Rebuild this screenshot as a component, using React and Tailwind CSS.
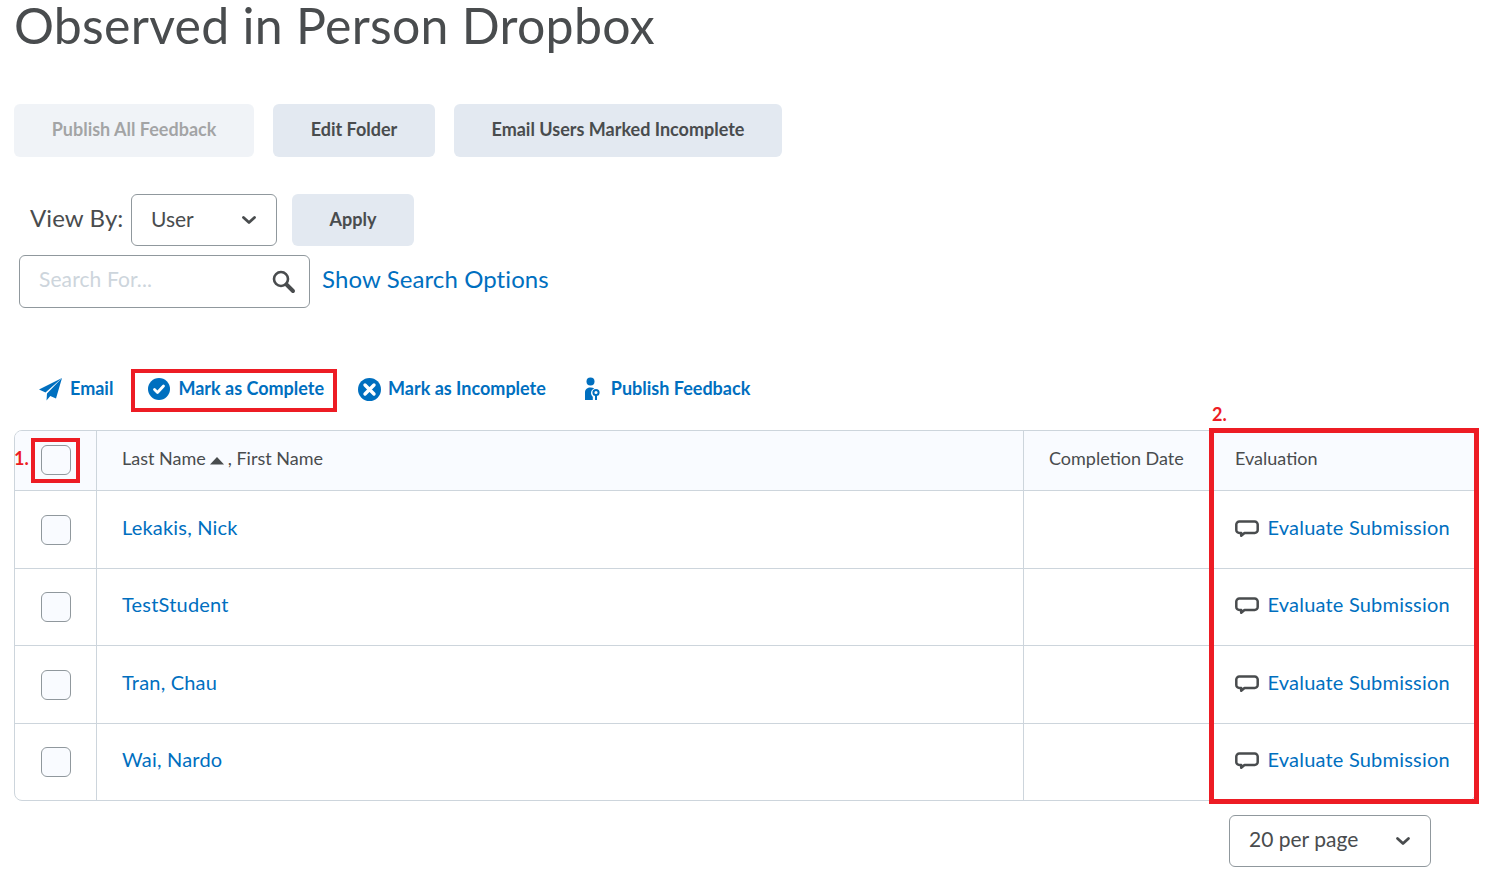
import React from "react";

const Chevron = () => (
  <svg width="16" height="10" viewBox="0 0 16 10" fill="none" className="shrink-0">
    <path d="M2.500 2.500L8 7.500l5.500-5" stroke="#494c4e" strokeWidth="2.800" strokeLinecap="round" strokeLinejoin="round" />
  </svg>
);

const Bubble = () => (
  <svg width="24" height="18" viewBox="0 0 24 18" fill="none" className="shrink-0 mt-[4px]">
    <path d="M4.500 1.500h15A3 3 0 0 1 22.700 4.500v5.500A3 3 0 0 1 19.500 13H9.500L6.200 15.800V13H4.500A3 3 0 0 1 1.300 10V4.500A3 3 0 0 1 4.500 1.500z" stroke="#494c4e" strokeWidth="2.500" strokeLinejoin="round" />
  </svg>
);

const Check = () => <span className="w-[30px] h-[30px] rounded-md border border-[#90989d] bg-[#f9fbff] block" />;

const Btn = ({ className, children }) => (
  <button className={"rounded-md bg-[#e3e9f1] text-[#494c4e] font-bold text-[18px] pb-[2px] " + className}>{children}</button>
);

const Row = ({ name, h }) => (
  <div className={"flex border-t border-[#cdd5dc] " + h}>
    <div className="w-[82px] shrink-0 border-r border-[#cdd5dc] flex items-center justify-center pl-[1px]"><Check /></div>
    <div className="flex-1 border-r border-[#cdd5dc] flex items-center pl-[25px] text-[20px] tracking-[0.2px] text-[#006fbf] pb-[6px]">{name}</div>
    <div className="w-[185px] shrink-0" />
    <div className="w-[266px] shrink-0 flex items-center pl-[26px] gap-[8.500px] pb-[6px]">
      <Bubble />
      <span className="text-[20px] tracking-[0.2px] text-[#006fbf] whitespace-nowrap">Evaluate Submission</span>
    </div>
  </div>
);

export default function App() {
  return (
    <div className="relative w-[1486px] h-[876px] overflow-hidden bg-white text-[#494c4e] font-['Lato','Liberation_Sans',sans-serif] pl-[14px]">
      <h1 className="h-[104px] text-[50px] leading-[50px] tracking-[0.27px] font-normal whitespace-nowrap">Observed in Person Dropbox</h1>

      <div className="flex gap-[19px] h-[53px]">
        <Btn className="w-[240px] opacity-50">Publish All Feedback</Btn>
        <Btn className="w-[162px]">Edit Folder</Btn>
        <Btn className="w-[328px]">Email Users Marked Incomplete</Btn>
      </div>

      <div className="flex items-center mt-[37px] h-[52px] pl-[16px]">
        <span className="text-[24px] tracking-[0.1px] w-[101px] pb-[4px]">View By:</span>
        <div className="w-[146px] h-[52px] rounded-md border border-[#90989d] flex items-center justify-between pl-[19px] pr-[19px] text-[21px]">
          <span className="pb-[3px]">User</span><Chevron />
        </div>
        <Btn className="ml-[15px] w-[122px] h-[52px]">Apply</Btn>
      </div>

      <div className="flex items-center mt-[9px] h-[53px] pl-[5px]">
        <div className="w-[291px] h-[53px] rounded-md border border-[#90989d] flex items-center justify-between pl-[19px] pr-[13px] text-[21px] tracking-[0.1px] text-[#cdd5dc]">
          <span className="pb-[5px]">Search For...</span>
          <svg width="25" height="25" viewBox="0 0 25 25" fill="none">
            <circle cx="10" cy="10" r="7" stroke="#494c4e" strokeWidth="2.600" />
            <path d="M15.500 15.500l6.500 6.500" stroke="#494c4e" strokeWidth="4" strokeLinecap="round" />
          </svg>
        </div>
        <span className="ml-[12px] text-[24px] tracking-[0.1px] text-[#006fbf] whitespace-nowrap pb-[6px]">Show Search Options</span>
      </div>

      <div className="flex items-center h-[40px] mt-[61px] pl-[25px] text-[18px] font-bold text-[#006fbf] whitespace-nowrap">
        <svg width="23" height="23" viewBox="0 0 23 23" fill="#006fbf" className="shrink-0">
          <path d="M23 0L0 11.500l6.500 3L23 0z" />
          <path d="M23 0L8 15.500l-.5 7 3.800-4.600 5.700 2.700L23 0z" />
        </svg>
        <span className="ml-[8px] pb-[2px]">Email</span>

        <svg width="22" height="22" viewBox="0 0 22 22" className="ml-[35px] shrink-0">
          <circle cx="11" cy="11" r="11" fill="#006fbf" />
          <path d="M6.500 11.500l3 3 6-6.500" stroke="#fff" strokeWidth="2.800" fill="none" strokeLinecap="round" strokeLinejoin="round" />
        </svg>
        <span className="ml-[8px] pb-[2px]">Mark as Complete</span>

        <svg width="23" height="23" viewBox="0 0 23 23" className="ml-[34px] shrink-0">
          <circle cx="11.500" cy="11.500" r="11.500" fill="#006fbf" />
          <path d="M7 7l9 9M16 7l-9 9" stroke="#fff" strokeWidth="3.400" strokeLinecap="round" />
        </svg>
        <span className="ml-[7px] pb-[2px]">Mark as Incomplete</span>

        <svg width="16" height="24" viewBox="0 0 16 24" fill="#006fbf" className="ml-[38px] shrink-0">
          <circle cx="6.500" cy="4.500" r="4" />
          <path d="M1 23v-7.500C1 12 3.500 10.500 6.500 10.500c1.500 0 2.800.3 3.800 1-2 .8-3.300 2.500-3.300 4.500 0 1.500.7 2.800 1.800 3.700V23H1z" />
          <circle cx="12" cy="15.500" r="2.600" fill="none" stroke="#006fbf" strokeWidth="2" />
          <path d="M11 18h2v5h-2z" />
        </svg>
        <span className="ml-[11px] pb-[2px]">Publish Feedback</span>
      </div>

      <div className="mt-[21px] w-[1462px] border border-[#cdd5dc] rounded-lg overflow-hidden">
        <div className="flex h-[59px] bg-[#f9fbff] text-[18px]">
          <div className="w-[82px] shrink-0 border-r border-[#cdd5dc] flex items-center justify-center pl-[1px] pb-[2px]"><Check /></div>
          <div className="flex-1 border-r border-[#cdd5dc] flex items-center pl-[25px] pb-[4px] whitespace-nowrap">
            Last Name
            <svg width="14" height="8" viewBox="0 0 14 8" className="ml-[4px] mr-[4px] mt-[4px]" fill="#494c4e"><path d="M7 0l7 7.500H0z" /></svg>
            , First Name
          </div>
          <div className="w-[185px] shrink-0 flex items-center pl-[25px] pb-[4px] whitespace-nowrap">Completion Date</div>
          <div className="w-[266px] shrink-0 flex items-center pl-[26px] pb-[4px]">Evaluation</div>
        </div>
        <Row name="Lekakis, Nick" h="h-[78px]" />
        <Row name="TestStudent" h="h-[77px]" />
        <Row name="Tran, Chau" h="h-[78px]" />
        <Row name="Wai, Nardo" h="h-[77px]" />
      </div>

      <div className="flex justify-end w-[1417px] mt-[14px]">
        <div className="w-[202px] h-[52px] rounded-md border border-[#90989d] flex items-center justify-between pl-[19px] pr-[19px] text-[21px]">
          <span className="pb-[5px]">20 per page</span><Chevron />
        </div>
      </div>

      <div className="absolute left-[131px] top-[369px] w-[206px] h-[43px] border-[4px] border-[#ed1c24]" />
      <div className="absolute left-[31px] top-[438px] w-[49px] h-[45px] border-[4px] border-[#ed1c24]" />
      <div className="absolute left-[1209px] top-[428px] w-[270px] h-[376px] border-[5px] border-[#ed1c24]" />
      <span className="absolute left-[14px] top-[448px] text-[18px] leading-[20px] font-bold text-[#ed1c24]">1.</span>
      <span className="absolute left-[1212px] top-[404px] text-[18px] leading-[20px] font-bold text-[#ed1c24]">2.</span>
    </div>
  );
}
